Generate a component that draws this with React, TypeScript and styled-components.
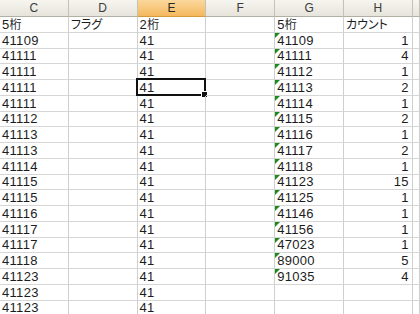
import styled, { createGlobalStyle, css } from "styled-components";

const GlobalStyle = createGlobalStyle`
  html, body {
    margin: 0;
    padding: 0;
    background: #fff;
  }
`;

const Sheet = styled.div`
  width: 420px;
  height: 314px;
  overflow: hidden;
  display: grid;
  grid-template-columns: repeat(6, 68.8px) 1fr;
  grid-template-rows: 17px;
  grid-auto-rows: 15.75px;
  font-family: "Liberation Sans", "Noto Sans CJK JP", sans-serif;
  font-feature-settings: "palt";
  font-size: 13px;
  color: #1c1c1c;
`;

const HeaderCell = styled.div<{ $active?: boolean }>`
  display: flex;
  align-items: center;
  justify-content: center;
  font-size: 12px;
  color: #3c3c3c;
  background: linear-gradient(#f6f5f0, #e6e4da);
  border-right: 1px solid #c4c2b6;
  border-bottom: 1px solid #b2b0a4;
  box-sizing: border-box;

  ${({ $active }) =>
    $active &&
    css`
      background: linear-gradient(#fbd89c, #f4b85e);
      color: #2a2a2a;
      border-bottom-color: #d49a3c;
    `}
`;

const Cell = styled.div<{ $align?: "left" | "right"; $flag?: boolean }>`
  position: relative;
  display: flex;
  align-items: flex-end;
  justify-content: ${({ $align }) => ($align === "right" ? "flex-end" : "flex-start")};
  padding: 0 ${({ $align }) => ($align === "right" ? "3px" : "0")} 0 2px;
  line-height: 14px;
  white-space: nowrap;
  border-right: 1px solid #cfcfcf;
  border-bottom: 1px solid #d6d6d6;
  box-sizing: border-box;
  letter-spacing: 0.3px;

  ${({ $flag }) =>
    $flag &&
    css`
      &::before {
        content: "";
        position: absolute;
        top: 0;
        left: 0;
        border-top: 5px solid #1d8a1d;
        border-right: 5px solid transparent;
      }
    `}
`;

const Jp = styled.span`
  font-size: 12px;
  letter-spacing: 0;
`;

const Selection = styled.div`
  position: absolute;
  top: -2px;
  left: -2px;
  right: -1px;
  bottom: -1px;
  border: 2px solid #111;
  pointer-events: none;
`;

const FillHandle = styled.div`
  position: absolute;
  right: -4px;
  bottom: -4px;
  width: 5px;
  height: 5px;
  background: #111;
  border: 1px solid #fff;
`;

const colC = ["5桁", "41109", "41111", "41111", "41111", "41111", "41112", "41113", "41113", "41114", "41115", "41115", "41116", "41117", "41117", "41118", "41123", "41123", "41123"];
const colG = ["5桁", "41109", "41111", "41112", "41113", "41114", "41115", "41116", "41117", "41118", "41123", "41125", "41146", "41156", "47023", "89000", "91035", "", ""];
const colH = ["カウント", "1", "4", "1", "2", "1", "2", "1", "2", "1", "15", "1", "1", "1", "1", "5", "4", "", ""];

const headers = ["C", "D", "E", "F", "G", "H", ""];

const renderText = (text: string) =>
  /[^\x00-\x7f]/.test(text) ? (
    <>
      {text.replace(/[^\x00-\x7f]+/g, "")}
      <Jp>{text.replace(/[\x00-\x7f]+/g, "")}</Jp>
    </>
  ) : (
    text
  );

export default function App() {
  return (
    <>
      <GlobalStyle />
      <Sheet>
        {headers.map((h, i) => (
          <HeaderCell key={i} $active={h === "E"}>
            {h}
          </HeaderCell>
        ))}
        {colC.map((c, r) => (
          <Row key={r} r={r} c={c} />
        ))}
      </Sheet>
    </>
  );
}

const Row = ({ r, c }: { r: number; c: string }) => {
  const isHead = r === 0;
  return (
    <>
      <Cell>{renderText(c)}</Cell>
      <Cell>{isHead && <Jp>フラグ</Jp>}</Cell>
      <Cell>
        {isHead ? renderText("2桁") : "41"}
        {r === 4 && (
          <Selection>
            <FillHandle />
          </Selection>
        )}
      </Cell>
      <Cell />
      <Cell $flag={!isHead && colG[r] !== ""}>{renderText(colG[r])}</Cell>
      <Cell $align={isHead ? "left" : "right"}>{renderText(colH[r])}</Cell>
      <Cell />
    </>
  );
};
